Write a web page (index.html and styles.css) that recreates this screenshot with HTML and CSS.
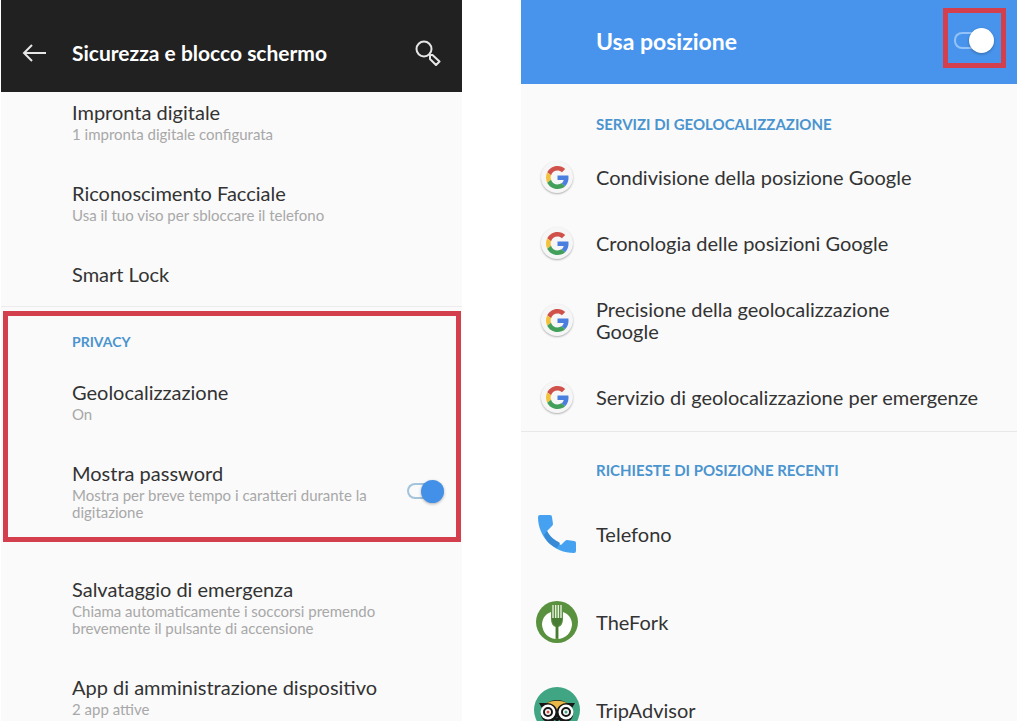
FILE: index.html
```html
<!DOCTYPE html>
<html lang="it">
<head>
    <meta charset="UTF-8">
    <meta name="viewport" content="width=device-width, initial-scale=1.0">
    <title>Sicurezza e posizione</title>
    <link rel="stylesheet" href="styles.css">
</head>
<body>
    <!-- Shared Google logo -->
    <svg class="defs" aria-hidden="true">
        <symbol id="google" viewBox="0 0 48 48">
            <path fill="#d0504a" d="M24 9.500c3.500 0 6.700 1.200 9.200 3.600l6.900-6.900C35.900 2.400 30.500 0 24 0 14.600 0 6.500 5.400 2.600 13.200l8 6.200C12.400 13.700 17.700 9.500 24 9.500z"/>
            <path fill="#4a7fe0" d="M47 24.500c0-1.600-.2-3.100-.4-4.500H24v9h12.900c-.6 3-2.300 5.500-4.800 7.200l7.700 6C44.400 38 47 31.800 47 24.500z"/>
            <path fill="#f3c13a" d="M10.500 28.600c-.5-1.500-.8-3-.8-4.600s.3-3.100.8-4.600l-8-6.200C.9 16.500 0 20.100 0 24s.9 7.500 2.600 10.800z"/>
            <path fill="#43a05a" d="M24 48c6.500 0 11.900-2.100 15.900-5.800l-7.700-6c-2.200 1.500-4.900 2.300-8.200 2.300-6.300 0-11.600-4.200-13.500-9.900l-8 6.200C6.500 42.600 14.600 48 24 48z"/>
        </symbol>
    </svg>

    <div class="screens">
        <main class="screen">
            <header class="topbar dark">
                <button class="icon-button" aria-label="Indietro">
                    <svg width="24" height="20" viewBox="0 0 24 20" fill="none" stroke="#e6e6e6" stroke-width="2">
                        <path d="M24 10H2M10 2L2 10l8 8"/>
                    </svg>
                </button>
                <h1>Sicurezza e blocco schermo</h1>
                <button class="icon-button" aria-label="Cerca">
                    <svg width="26" height="26" viewBox="0 0 26 26" fill="none" stroke="#e6e6e6" stroke-width="2">
                        <circle cx="9" cy="9" r="7.500"/>
                        <path d="M14 14l2 2"/>
                        <path d="M15 16.500q0-2 2.500-1.500l7 6.500-3.500 3.500-6-6z" stroke-linejoin="round"/>
                    </svg>
                </button>
            </header>

            <section class="settings">
                <div class="item">
                    <h3>Impronta digitale</h3>
                    <p>1 impronta digitale configurata</p>
                </div>
                <div class="item">
                    <h3>Riconoscimento Facciale</h3>
                    <p>Usa il tuo viso per sbloccare il telefono</p>
                </div>
                <div class="item">
                    <h3>Smart Lock</h3>
                </div>
            </section>

            <section class="settings highlight">
                <h2>PRIVACY</h2>
                <div class="item">
                    <h3>Geolocalizzazione</h3>
                    <p>On</p>
                </div>
                <div class="item with-switch">
                    <div class="item-text">
                        <h3><label for="showPassword">Mostra password</label></h3>
                        <p>Mostra per breve tempo i caratteri durante la digitazione</p>
                    </div>
                    <input type="checkbox" id="showPassword" class="switch" checked>
                </div>
            </section>

            <section class="settings last">
                <div class="item">
                    <h3>Salvataggio di emergenza</h3>
                    <p>Chiama automaticamente i soccorsi premendo brevemente il pulsante di accensione</p>
                </div>
                <div class="item">
                    <h3>App di amministrazione dispositivo</h3>
                    <p>2 app attive</p>
                </div>
            </section>
        </main>

        <main class="screen">
            <header class="topbar blue">
                <h1><label for="useLocation">Usa posizione</label></h1>
                <div class="switch-frame">
                    <input type="checkbox" id="useLocation" class="switch light" checked>
                </div>
            </header>

            <section class="group">
                <h2>SERVIZI DI GEOLOCALIZZAZIONE</h2>
                <ul>
                    <li>
                        <span class="icon"><span class="badge"><svg width="23" height="23"><use href="#google"/></svg></span></span>
                        <span>Condivisione della posizione Google</span>
                    </li>
                    <li>
                        <span class="icon"><span class="badge"><svg width="23" height="23"><use href="#google"/></svg></span></span>
                        <span>Cronologia delle posizioni Google</span>
                    </li>
                    <li>
                        <span class="icon"><span class="badge"><svg width="23" height="23"><use href="#google"/></svg></span></span>
                        <span>Precisione della geolocalizzazione<br>Google</span>
                    </li>
                    <li>
                        <span class="icon"><span class="badge"><svg width="23" height="23"><use href="#google"/></svg></span></span>
                        <span>Servizio di geolocalizzazione per emergenze</span>
                    </li>
                </ul>
            </section>

            <section class="group recent">
                <h2>RICHIESTE DI POSIZIONE RECENTI</h2>
                <ul>
                    <li>
                        <span class="icon">
                            <svg width="38" height="38" viewBox="0 0 38 38">
                                <path fill="#46a2f0" d="M2 0h10q2 0 2 2l1 7q0 1-1 2l-5 5c3 6 8 11 14 14l4-4q1-1 2-1l7 1q2 0 2 2v8q0 2-2 2C16 38 0 22 0 2q0-2 2-2z"/>
                                <path fill="#388ad6" d="M9 16c3 6 8 9 13 12l-3 5C12 30 8 26 6 20z"/>
                            </svg>
                        </span>
                        <span>Telefono</span>
                    </li>
                    <li>
                        <span class="icon">
                            <svg width="42" height="42" viewBox="0 0 42 42">
                                <circle cx="21" cy="21" r="21" fill="#5a913f"/>
                                <path fill="#fff" d="M15 11C9 13 6 18 6 24c1 8 6 13 13.500 14V26c-3-1-4.500-4-4.500-8zM27 11c6 2 9 7 9 13-1 8-6 13-13.500 14V26c3-1 4.500-4 4.500-8z"/>
                                <path d="M17 4v13M19.700 4v13M22.300 4v13M25 4v13" stroke="#eef4e9" stroke-width="1.300"/>
                                <path d="M16 17h10c0 5-2 7-4 8v12h-2V25c-2-1-4-3-4-8z" fill="#477b34"/>
                            </svg>
                        </span>
                        <span>TheFork</span>
                    </li>
                    <li>
                        <span class="icon">
                            <svg width="46" height="46" viewBox="0 0 46 46">
                                <circle cx="23" cy="23" r="23" fill="#40a583"/>
                                <path fill="#171717" d="M5 16h8c6-4 14-4 20 0h8l-3 5c4 8-2 15-8 14-3 0-5-2-7-5-2 3-4 5-7 5-6 1-12-6-8-14z"/>
                                <path fill="#e8b948" d="M13 16c6-3 14-3 20 0-5 0-9 3-10 7-1-4-5-7-10-7z"/>
                                <circle cx="14" cy="25" r="7.500" fill="#fff"/>
                                <circle cx="32" cy="25" r="7.500" fill="#fff"/>
                                <circle cx="14" cy="25" r="4" fill="#fff" stroke="#171717" stroke-width="2"/>
                                <circle cx="32" cy="25" r="4" fill="#fff" stroke="#171717" stroke-width="2"/>
                                <circle cx="14" cy="25" r="1.500" fill="#d5503f"/>
                                <circle cx="32" cy="25" r="1.500" fill="#40a583"/>
                                <path fill="#171717" d="M20 31h6l-3 5z"/>
                            </svg>
                        </span>
                        <span>TripAdvisor</span>
                    </li>
                </ul>
            </section>
        </main>
    </div>
</body>
</html>
```
FILE: styles.css
```css
* {
    box-sizing: border-box;
}

body {
    font-family: Lato, "Noto Sans", sans-serif;
    background-color: #fff;
    color: #333;
    margin: 0;
}

h1, h2, h3, p, ul {
    margin: 0;
    padding: 0;
}

.defs {
    display: none;
}

.screens {
    display: grid;
    grid-template-columns: 461fr 496fr;
    gap: 59px;
    height: 100vh;
    padding: 0 7px 0 1px;
    overflow: hidden;
}

.screen {
    background-color: #fafafa;
    min-width: 0;
}

/* Top bars */
.topbar {
    display: flex;
    align-items: center;
    color: #fff;
}

.topbar h1 {
    flex: 1;
    font-size: 21px;
    line-height: 26px;
    font-weight: 700;
}

.dark {
    height: 92px;
    padding: 14px 21px 0;
    gap: 26px;
    background-color: #212121;
}

.blue {
    height: 84px;
    padding: 0 11px 8px 75px;
    background-color: #4894ec;
}

.blue h1 {
    padding-top: 6px;
    font-size: 23px;
}

.icon-button {
    display: flex;
    padding: 0;
    border: none;
    background: none;
    cursor: pointer;
}

/* Security screen */
.settings {
    display: flex;
    flex-direction: column;
    gap: 38px;
    padding: 8px 18px 20px 71px;
    border-bottom: 1px solid #ececec;
}

.item h3 {
    font-size: 20px;
    line-height: 24px;
    font-weight: 400;
}

.item p {
    max-width: 320px;
    margin-top: 2px;
    font-size: 15px;
    line-height: 17px;
    color: #a8a8a8;
}

h2 {
    font-size: 15px;
    line-height: 20px;
    font-weight: 700;
    color: #4a94cf;
}

.highlight {
    margin: 4px 1px 0 2px;
    padding: 16px 12px 16px 64px;
    border: 5px solid #d43f4e;
}

.highlight h2 {
    margin-bottom: -10px;
    font-size: 14px;
}

.last {
    padding-top: 35px;
    border-bottom: none;
}

.with-switch {
    display: flex;
    align-items: center;
    justify-content: space-between;
    gap: 20px;
}

/* Switches */
.switch {
    appearance: none;
    display: flex;
    align-items: center;
    justify-content: flex-end;
    flex: none;
    width: 37px;
    height: 16px;
    margin: 0;
    border: 2px solid #a3c4dc;
    border-right: none;
    border-radius: 8px;
    cursor: pointer;
}

.switch::before {
    content: "";
    flex: none;
    width: 23px;
    height: 23px;
    border-radius: 50%;
    background-color: #4390e8;
    box-shadow: 0 1px 3px rgba(0, 0, 0, 0.3);
}

.light {
    width: 40px;
    height: 17px;
    border-color: #93c2f8;
}

.light::before {
    width: 25px;
    height: 25px;
    background-color: #fff;
}

.switch-frame {
    display: flex;
    align-items: center;
    justify-content: center;
    width: 63px;
    height: 60px;
    padding: 5px 2px 0 0;
    border: 5px solid #d43f4e;
}

/* Location screen */
.group {
    padding-top: 30px;
    border-bottom: 1px solid #e8e8e8;
}

.group h2 {
    padding-left: 75px;
    margin-bottom: 10px;
}

.group ul {
    padding-bottom: 1px;
    list-style: none;
}

.group li {
    display: flex;
    align-items: center;
    gap: 16px;
    padding: 22px 13px;
    font-size: 20px;
    line-height: 22px;
}

.icon {
    display: flex;
    align-items: center;
    justify-content: center;
    flex: none;
    width: 46px;
    height: 22px;
}

.badge {
    display: flex;
    align-items: center;
    justify-content: center;
    flex: none;
    width: 32px;
    height: 32px;
    border-radius: 50%;
    background-color: #f6f6f6;
    box-shadow: 0 1px 2px rgba(0, 0, 0, 0.3);
}

.icon svg {
    flex: none;
}

.recent {
    padding-top: 28px;
    border-bottom: none;
}

.recent li {
    padding-top: 33px;
    padding-bottom: 33px;
}
```
